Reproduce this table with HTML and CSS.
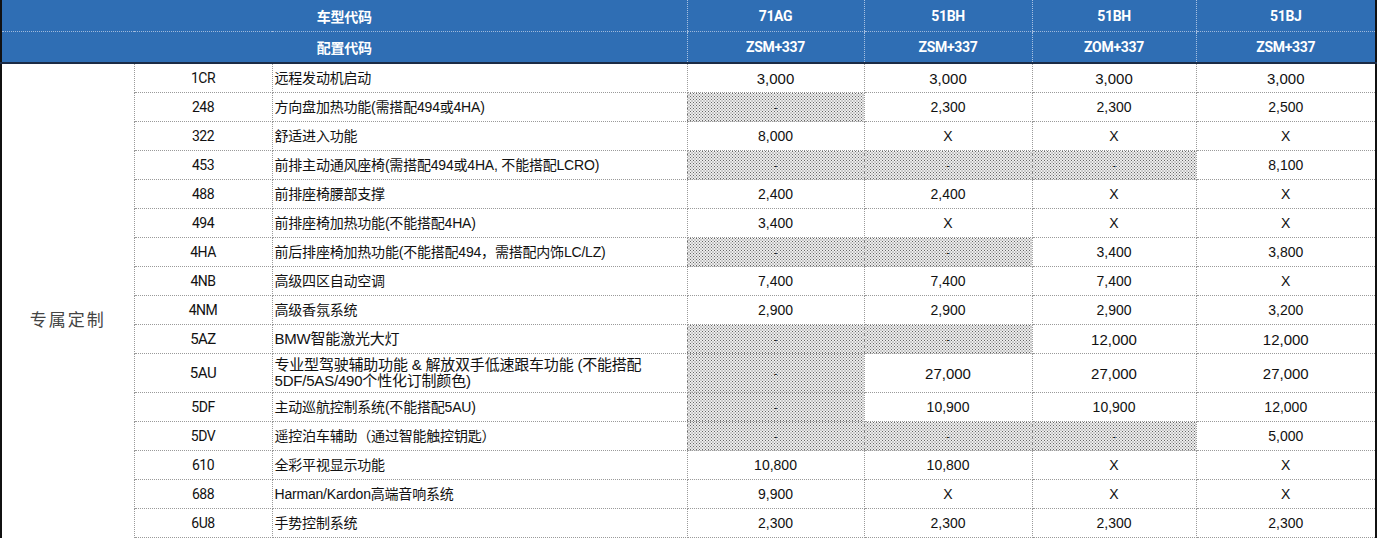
FILE: index.html
```html
<!DOCTYPE html>
<html lang="zh">
<head>
<meta charset="utf-8">
<title>专属定制</title>
<link rel="stylesheet" href="styles.css">
</head>
<body>
<table class="price">
  <colgroup>
    <col class="c1"><col class="c2"><col class="c3"><col class="c4"><col class="c5"><col class="c6"><col class="c7">
  </colgroup>
  <thead>
    <tr class="h1">
      <th colspan="3">车型代码</th><th>71AG</th><th>51BH</th><th>51BH</th><th>51BJ</th>
    </tr>
    <tr class="h2">
      <th colspan="3">配置代码</th><th>ZSM+337</th><th>ZSM+337</th><th>ZOM+337</th><th>ZSM+337</th>
    </tr>
  </thead>
  <tbody>
    <tr>
      <td class="group" rowspan="16"><span>专属定制</span></td>
      <td class="code">1CR</td><td class="desc">远程发动机启动</td>
      <td class="v big">3,000</td><td class="v big">3,000</td><td class="v big">3,000</td><td class="v big">3,000</td>
    </tr>
    <tr>
      <td class="code">248</td><td class="desc">方向盘加热功能(需搭配494或4HA)</td>
      <td class="v na">-</td><td class="v">2,300</td><td class="v">2,300</td><td class="v">2,500</td>
    </tr>
    <tr>
      <td class="code">322</td><td class="desc">舒适进入功能</td>
      <td class="v">8,000</td><td class="v">X</td><td class="v">X</td><td class="v">X</td>
    </tr>
    <tr>
      <td class="code">453</td><td class="desc">前排主动通风座椅(需搭配494或4HA, 不能搭配LCRO)</td>
      <td class="v na">-</td><td class="v na">-</td><td class="v na">-</td><td class="v">8,100</td>
    </tr>
    <tr>
      <td class="code">488</td><td class="desc">前排座椅腰部支撑</td>
      <td class="v">2,400</td><td class="v">2,400</td><td class="v">X</td><td class="v">X</td>
    </tr>
    <tr>
      <td class="code">494</td><td class="desc">前排座椅加热功能(不能搭配4HA)</td>
      <td class="v">3,400</td><td class="v">X</td><td class="v">X</td><td class="v">X</td>
    </tr>
    <tr>
      <td class="code">4HA</td><td class="desc">前后排座椅加热功能(不能搭配494，需搭配内饰LC/LZ)</td>
      <td class="v na">-</td><td class="v na">-</td><td class="v">3,400</td><td class="v">3,800</td>
    </tr>
    <tr>
      <td class="code">4NB</td><td class="desc">高级四区自动空调</td>
      <td class="v">7,400</td><td class="v">7,400</td><td class="v">7,400</td><td class="v">X</td>
    </tr>
    <tr>
      <td class="code">4NM</td><td class="desc">高级香氛系统</td>
      <td class="v">2,900</td><td class="v">2,900</td><td class="v">2,900</td><td class="v">3,200</td>
    </tr>
    <tr>
      <td class="code big">5AZ</td><td class="desc big">BMW智能激光大灯</td>
      <td class="v na">-</td><td class="v na">-</td><td class="v big">12,000</td><td class="v big">12,000</td>
    </tr>
    <tr class="tall">
      <td class="code big">5AU</td><td class="desc big">专业型驾驶辅助功能 &amp; 解放双手低速跟车功能 (不能搭配<br>5DF/5AS/490个性化订制颜色)</td>
      <td class="v na">-</td><td class="v big">27,000</td><td class="v big">27,000</td><td class="v big">27,000</td>
    </tr>
    <tr>
      <td class="code">5DF</td><td class="desc">主动巡航控制系统(不能搭配5AU)</td>
      <td class="v na">-</td><td class="v">10,900</td><td class="v">10,900</td><td class="v">12,000</td>
    </tr>
    <tr>
      <td class="code">5DV</td><td class="desc">遥控泊车辅助（通过智能触控钥匙）</td>
      <td class="v na">-</td><td class="v na">-</td><td class="v na">-</td><td class="v">5,000</td>
    </tr>
    <tr>
      <td class="code">610</td><td class="desc">全彩平视显示功能</td>
      <td class="v">10,800</td><td class="v">10,800</td><td class="v">X</td><td class="v">X</td>
    </tr>
    <tr>
      <td class="code">688</td><td class="desc">Harman/Kardon高端音响系统</td>
      <td class="v">9,900</td><td class="v">X</td><td class="v">X</td><td class="v">X</td>
    </tr>
    <tr>
      <td class="code">6U8</td><td class="desc">手势控制系统</td>
      <td class="v">2,300</td><td class="v">2,300</td><td class="v">2,300</td><td class="v">2,300</td>
    </tr>
  </tbody>
</table>
</body>
</html>
```

FILE: styles.css
```css
html, body {
  margin: 0;
  padding: 0;
  background: #fff;
}

.price {
  border-collapse: collapse;
  table-layout: fixed;
  width: 1375px;
  font-family: "Liberation Sans", Arial, "Noto Sans CJK SC", sans-serif;
  color: #111;
  border-left: 2px solid #111;
  border-right: 2px solid #111;
}

.c1 { width: 133px; }
.c2 { width: 138px; }
.c3 { width: 415px; }
.c4 { width: 177px; }
.c5 { width: 168px; }
.c6 { width: 164px; }
.c7 { width: 180px; }

thead th {
  background: #2f6eb4;
  color: #fff;
  font-family: Roboto, "Noto Sans CJK SC", sans-serif;
  font-weight: 700;
  font-size: 14px;
  letter-spacing: -0.3px;
  padding: 0;
  text-align: center;
  border-left: 1px dotted #a9c2e2;
}

thead th:first-child {
  border-left: none;
}

.h1 th {
  height: 31px;
  border-bottom: 1px dotted #9fb9dc;
}

.h2 th {
  height: 30px;
  border-bottom: 2px solid #1b2b45;
}

tbody td {
  height: 28px;
  padding: 0;
  border: 1px dotted #9a9a9a;
  font-size: 14px;
  vertical-align: middle;
}

tbody tr.tall td {
  height: 38px;
}

td.group {
  border-bottom: none;
  text-align: center;
  vertical-align: top;
  padding-top: 242px;
  font-family: "Noto Sans CJK SC", sans-serif;
  font-size: 17px;
  letter-spacing: 2px;
  color: #444;
}

td.code {
  text-align: center;
  font-family: Roboto, "Liberation Sans", sans-serif;
  letter-spacing: -0.5px;
  font-size: 14px;
}

td.desc {
  text-align: left;
  padding-left: 2px;
  font-family: "Liberation Sans", "Noto Sans CJK SC", sans-serif;
  font-size: 14px;
  letter-spacing: -0.2px;
  line-height: 16px;
}

td.v {
  text-align: center;
  font-size: 14px;
}

td.big {
  font-size: 15px;
}

td.desc.big, td.code.big {
  font-size: 15px;
}

td.na {
  background-color: #eeeeee;
  background-image:
    radial-gradient(circle, #666 0.7px, transparent 1px),
    radial-gradient(circle, #666 0.7px, transparent 1px);
  background-size: 3px 3px, 3px 3px;
  background-position: 0 0, 1.5px 1.5px;
  font-size: 11px;
}
```
